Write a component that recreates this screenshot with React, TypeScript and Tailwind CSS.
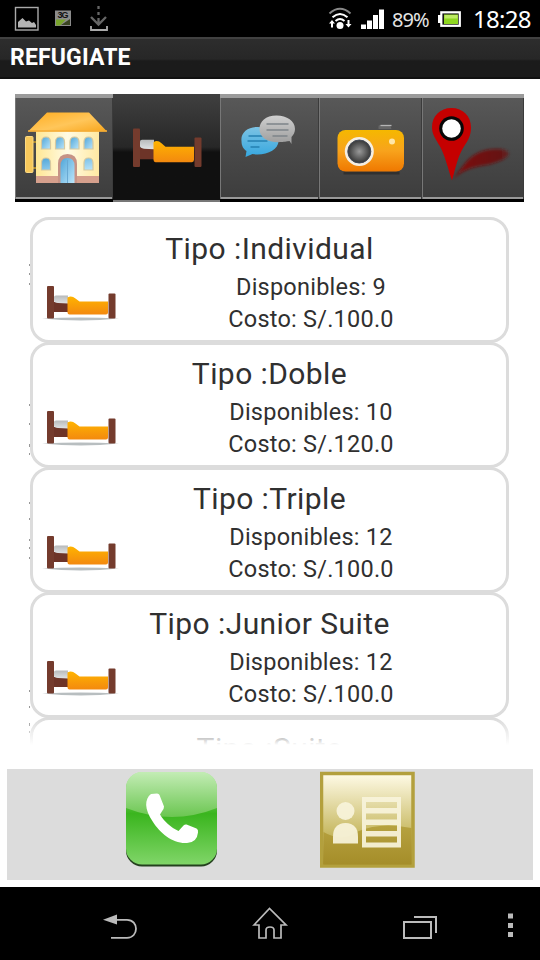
import React from "react";

type Room = { name: string; available?: number; price?: string };

const rooms: Room[] = [
  { name: "Individual", available: 9, price: "100.0" },
  { name: "Doble", available: 10, price: "120.0" },
  { name: "Triple", available: 12, price: "100.0" },
  { name: "Junior Suite", available: 12, price: "100.0" },
  { name: "Suite" },
];

function StatusBar() {
  return (
    <header className="flex h-[37px] items-center bg-black pl-[14px] pr-[9px] font-['Noto_Sans',sans-serif] text-white">
      <svg className="h-[37px] w-[100px]" viewBox="14 0 100 37">
        <rect x="15.500" y="7.500" width="22.500" height="22.500" fill="none" stroke="#aaa" strokeWidth="1.400" />
        <path d="M18 27.500v-5.500l4.500-4 3.500 3.500 3-1 3 2.500 2-1 2 3v2.500z" fill="#b4b4b4" />
        <rect x="55" y="10.500" width="16" height="15.500" fill="#8b8b8b" />
        <path d="M56 19.500h10l-6 6h-4z" fill="#79a52b" />
        <path d="M70 19v6h-9z" fill="#394421" />
        <text x="57.500" y="18" fontSize="9" fontWeight="700" fill="#111" fontFamily="Liberation Sans, sans-serif" textLength="11">3G</text>
        <path d="M98.500 6v3M98.500 12v3M98.500 18v6M91 17l7.500 7.500 7.500-7.500" fill="none" stroke="#666" strokeWidth="2.300" />
        <path d="M91 26v4h16v-4" fill="none" stroke="#aaa" strokeWidth="1.800" />
      </svg>
      <div className="flex-1" />
      <svg className="h-[37px] w-[58px]" viewBox="326 0 58 37">
        <path d="M328.500 13.500q10.500-9.500 21 0" fill="none" stroke="#888" strokeWidth="2" />
        <path d="M331.500 17.300q7.500-6.600 15 0M334.500 21q4.500-4 9 0" fill="none" stroke="#fff" strokeWidth="2" />
        <circle cx="339" cy="25.500" r="3.500" fill="#fff" />
        <path d="M328 23.500l3-3.500 3 3.500h-2v4h-2v-4zM344.500 24h2v-4h2v4h2l-3 3.500z" fill="#fff" />
        <path d="M360 24.500h5v4.500h-5zM366 20.500h5v8.500h-5zM372 15h5v14h-5zM378 9.500h5V29h-5z" fill="#fff" />
      </svg>
      <span className="ml-[7px] mt-[2px] w-[38px] whitespace-nowrap text-[20px] leading-none tracking-[-0.9px] text-[#e4e4e4]">89%</span>
      <svg className="ml-[8px] h-[37px] w-[24px]" viewBox="438 0 24 37">
        <path d="M438 15h3v8h-3z" fill="#fff" />
        <rect x="441.300" y="12.300" width="18.500" height="13.500" fill="#151515" stroke="#fff" strokeWidth="2.200" />
        <rect x="444" y="14.500" width="14" height="9.500" fill="#8ed620" />
        <path d="M444.500 15h13v3.500h-13z" fill="#bdeb63" />
      </svg>
      <span className="ml-[11px] mt-[1px] w-[58px] whitespace-nowrap text-[24px] leading-none tracking-[-0.7px]">18:28</span>
    </header>
  );
}

function HouseIcon() {
  return (
    <svg className="h-full w-full" viewBox="15 94 98 108">
      <defs>
        <linearGradient id="roof" x1="0" y1="0" x2="1" y2="1">
          <stop stopColor="#ffad20" />
          <stop offset="0.55" stopColor="#ffc65a" />
          <stop offset="1" stopColor="#f8a51b" />
        </linearGradient>
        <linearGradient id="wall" x2="1">
          <stop stopColor="#ffe794" />
          <stop offset="0.5" stopColor="#fffbe4" />
          <stop offset="1" stopColor="#ffe9a2" />
        </linearGradient>
        <linearGradient id="glass" x1="0" y1="0" x2="1" y2="1">
          <stop stopColor="#4fa5d8" />
          <stop offset="1" stopColor="#bbe5fa" />
        </linearGradient>
      </defs>
      <path d="M31 142h6M31 168h6" stroke="#c99a26" strokeWidth="1.500" />
      <rect x="25.500" y="136.500" width="7.500" height="36" rx="1" fill="#f7c85b" stroke="#fdda82" />
      <rect x="36" y="130" width="63" height="53" fill="url(#wall)" />
      <rect x="36" y="176" width="63" height="7" fill="#d6a08d" />
      <path d="M47 112.500h42l18 19H28z" fill="url(#roof)" />
      <path d="M28 131h79" stroke="#f3ad37" strokeWidth="1.500" />
      <g fill="url(#glass)" stroke="#d5c8a0" strokeWidth="1.200">
        {[41.5, 55.5, 70, 84].map((x) => (
          <path key={x} d={`M${x} 149v-7q0-5 4.500-5t4.500 5v7z`} />
        ))}
        <path d="M41.500 170v-7q0-5 4.500-5t4.500 5v7zM84 170v-7q0-5 4.500-5t4.500 5v7z" />
      </g>
      <path d="M58 183v-19q0-10 9.500-10t9.500 10v19z" fill="#c69386" />
      <path d="M60.500 183v-17q0-8 7-8t7 8v17z" fill="url(#glass)" />
      <path d="M67.500 160v23" stroke="#69a9d3" />
    </svg>
  );
}

function BedArt({ dark = false }: { dark?: boolean }) {
  return (
    <svg className={dark ? "mt-[7px] h-[52px] w-[78px]" : "h-[44px] w-[78px]"} viewBox="0 0 78 44" preserveAspectRatio="none">
      <defs>
        <linearGradient id="blanket" x2="0" y2="1">
          <stop stopColor="#ffb400" />
          <stop offset="1" stopColor="#f3890f" />
        </linearGradient>
        <linearGradient id="pillow" x2="0" y2="1">
          <stop stopColor="#b8babb" />
          <stop offset="1" stopColor="#dfe2e4" />
        </linearGradient>
      </defs>
      {!dark && <path d="M0 35.500q38-2 77 0-38 4-77 0z" fill="#b8bec0" />}
      <path d="M11 19h18v10H11z" fill="#6d3428" />
      <path d="M12 14q0-1.500 2-1.500h12v8l-10-.5q-4-.5-4-2z" fill="url(#pillow)" />
      <path d="M25.500 14.500q4-2.500 8 1l4 3H66v11q0 2-2 2H27.500q-2 0-2-2z" fill="url(#blanket)" />
      <rect x="5" y="3" width="7" height="32.500" rx="1" fill="#743b2d" />
      <rect x="66.500" y="10.500" width="7" height="25" rx="1" fill="#743b2d" />
    </svg>
  );
}

function ChatIcon() {
  return (
    <svg className="h-full w-full" viewBox="220 94 98 108">
      <defs>
        <linearGradient id="blueChat" x2="0" y2="1">
          <stop stopColor="#7cc3e4" />
          <stop offset="1" stopColor="#36a7df" />
        </linearGradient>
        <linearGradient id="grayChat" x2="0" y2="1">
          <stop stopColor="#d0d0d0" />
          <stop offset="1" stopColor="#9c9c9c" />
        </linearGradient>
      </defs>
      <path d="M257 127c-10 0-17 6-16 14 0 5 2 8 5 10l-1 6 7-3c13 2 26-4 26-13 0-8-9-14-21-14z" fill="url(#blueChat)" />
      <path d="M248 136h18M247 141h20M250 147h9" stroke="#2580b1" strokeWidth="1.300" />
      <path d="M276 115.500c-11 0-17 6-17 13.500 0 9 9 14 22 13 3 0 7-1 8-1l2 3v-7c2-2 3.500-5 3.500-8 0-8-8-13.500-18.500-13.500z" fill="url(#grayChat)" />
      <path d="M266 124h22M266 130h22M272 136h15" stroke="#7d8489" strokeWidth="1.300" />
    </svg>
  );
}

function CameraIcon() {
  return (
    <svg className="h-full w-full" viewBox="319 94 102 108">
      <defs>
        <linearGradient id="cameraBody" x2="0" y2="1">
          <stop stopColor="#f5b800" />
          <stop offset="0.5" stopColor="#f8a31c" />
          <stop offset="1" stopColor="#ef7800" />
        </linearGradient>
        <radialGradient id="lens">
          <stop stopColor="#999" />
          <stop offset="1" stopColor="#373737" />
        </radialGradient>
      </defs>
      <path d="M378 129v-3q0-1 2-1h8q2 0 3 4z" fill="#666" />
      <path d="M380 125.500h11" stroke="#b5b5b5" strokeWidth="1.300" />
      <path d="M343 173h56" stroke="#303030" strokeWidth="3" />
      <rect x="337" y="130" width="66.500" height="41.500" rx="8" fill="url(#cameraBody)" />
      <circle cx="358.800" cy="151.500" r="14.500" fill="#f5eee2" />
      <circle cx="358.800" cy="151.500" r="11.500" fill="url(#lens)" stroke="#454b58" strokeWidth="1" />
      <circle cx="391.500" cy="141.500" r="3" fill="#ffe6a7" />
    </svg>
  );
}

function PinIcon() {
  return (
    <svg className="h-full w-full" viewBox="422 94 102 108">
      <defs>
        <filter id="shadowBlur"><feGaussianBlur stdDeviation="1.700" /></filter>
        <linearGradient id="pinShadow" x2="1"><stop stopColor="#7e0505" /><stop offset="1" stopColor="#651515" stopOpacity=".9" /></linearGradient>
      </defs>
      <path d="M453 179l14-18c8-8 17-12 29-12 17 0 16 8 1 13-12 5-28 2-44 17z" fill="url(#pinShadow)" filter="url(#shadowBlur)" />
      <path d="M451.500 108C440 108 432 116 432 127.500c0 7 4 12 8 19 5 9 8 22 12 34 4-14 6-25 12-34 4-6 7-11 7-19 0-11.500-8-19.500-19.500-19.500z" fill="#c50000" />
      <circle cx="451.500" cy="128.500" r="12.300" fill="#080808" />
      <circle cx="451.500" cy="128.500" r="9.300" fill="#fff" />
    </svg>
  );
}

const tabClass =
  "h-[108px] border-t-4 border-b-[3px] border-t-[#9b9b9b] border-b-black bg-linear-to-b from-[#585858] via-[#484848] via-55% to-[#3d3d3d] shadow-[inset_1px_0_#777,inset_-1px_0_#3b3b3b,inset_0_-2px_#999]";

function Tabs() {
  return (
    <nav className="mx-[15px] mt-[15px] grid h-[108px] w-[509px] grid-cols-[98px_107px_99px_103px_102px]">
      <button className={tabClass}><span className="-mt-1 block h-[108px]"><HouseIcon /></span></button>
      <button className="flex h-[108px] items-center justify-center border-b-2 border-[#777] bg-linear-to-b from-[#404040] via-[#272727] via-50% to-[#101010] to-55%">
        <BedArt dark />
      </button>
      <button className={tabClass}><span className="-mt-1 block h-[108px]"><ChatIcon /></span></button>
      <button className={tabClass}><span className="-mt-1 block h-[108px]"><CameraIcon /></span></button>
      <button className={tabClass}><span className="-mt-1 block h-[108px]"><PinIcon /></span></button>
    </nav>
  );
}

function RoomCard({ room }: { room: Room }) {
  return (
    <article className="-mb-px h-[126px] shrink-0 rounded-[19px] border-[3px] border-[#dcdcdc] bg-white text-[#303030]">
      <h2 className="h-[51px] pt-[11px] text-center text-[30px] leading-[36px] tracking-[0.42px]">Tipo :{room.name}</h2>
      {room.price && (
        <div className="flex">
          <div className="ml-[9px] mt-[12px] w-[78px]"><BedArt /></div>
          <div className="ml-[33px] w-[316px] text-center text-[23.5px] leading-8 tracking-[0.23px]">
            <p>Disponibles: {room.available}</p>
            <p>Costo: S/.{room.price}</p>
          </div>
        </div>
      )}
    </article>
  );
}

function PhoneIcon() {
  return (
    <svg className="h-[97px] w-[93px]" viewBox="125 770 93 97">
      <defs>
        <linearGradient id="green" x2="0" y2="1"><stop stopColor="#b8e9a8" /><stop offset=".45" stopColor="#3ab51e" /><stop offset="1" stopColor="#80d568" /></linearGradient>
        <linearGradient id="gloss" x2="0" y2="1"><stop stopColor="#c5edb7" /><stop offset="1" stopColor="#6bc651" /></linearGradient>
        <clipPath id="phoneClip"><rect x="126" y="771" width="91" height="92.500" rx="16" /></clipPath>
      </defs>
      <rect x="126" y="773" width="91" height="92.500" rx="16" fill="#24401e" />
      <rect x="126" y="771" width="91" height="92.500" rx="16" fill="url(#green)" />
      <path clipPath="url(#phoneClip)" d="M126 770h91v37q-45 18-91 0z" fill="url(#gloss)" />
      <path d="M151 793l6-.5q2 0 2.500 1.500l4.500 11.500q0 2-1.500 4l-2.500 4c4 7 11 13 18.500 16.500l5-5.500q1.500-1.500 3-1l10 4q2 1 1.500 4-1 10-11 10.500c-14 1-27-10-34-21-9-13-8.500-23-2-28z" fill="#fff" />
    </svg>
  );
}

function ContactIcon() {
  return (
    <svg className="h-[97px] w-[95px]" viewBox="320 771 95 97">
      <defs>
        <linearGradient id="gold" x2="0" y2="1"><stop stopColor="#fffbe7" /><stop offset=".62" stopColor="#cabc68" /><stop offset="1" stopColor="#a18b26" /></linearGradient>
        <linearGradient id="goldBase" x2="0" y2="1"><stop stopColor="#b6a240" /><stop offset="1" stopColor="#a58d29" /></linearGradient>
      </defs>
      <rect x="321.500" y="773.500" width="91.500" height="92.500" fill="url(#gold)" stroke="#b3a03d" strokeWidth="3.500" />
      <path d="M323.500 832q19 11 34-.5 23-10 54-3.500v36.500h-88z" fill="url(#goldBase)" />
      <g fill="#f7f3da" fillOpacity=".93">
        <circle cx="345.500" cy="811" r="9" />
        <path d="M333 843.500v-7q0-13 12.500-13.500 12.500.5 12.500 13.500v7z" />
        <path fillRule="evenodd" d="M362 797h39v50.500h-39zm4 5v6h31v-6zm0 11.500v6h31v-6zm0 11.500v6h31v-6zm0 11.500v6h31v-6z" />
      </g>
    </svg>
  );
}

function SystemNav() {
  return (
    <footer className="h-[73px] bg-black">
      <svg className="h-full w-full" viewBox="0 887 540 73" fill="none" stroke="#bbb">
        <path d="M115 919.800h12c12 0 12 18 0 18h-16" strokeWidth="1.800" />
        <path d="M103 919.800l14-5.300v10z" fill="#bbb" stroke="none" />
        <path d="M254 925l15.500-16.500 16.500 16.500h-5v13h-7v-8q0-3-4-3t-4 3v8h-7v-13z" strokeWidth="1.700" />
        <rect x="404" y="922" width="27" height="16" strokeWidth="2" />
        <path d="M414 917h22v16" strokeWidth="2" />
        <path d="M508 913.500h5v5h-5zM508 923h5v5h-5zM508 932h5v5h-5z" fill="#bbb" stroke="none" />
      </svg>
    </footer>
  );
}

export default function App() {
  return (
    <main className="flex h-[960px] w-[540px] flex-col overflow-hidden bg-white font-[Roboto,sans-serif]">
      <StatusBar />
      <div className="h-[42px] border-t-2 border-[#414141] bg-linear-to-b from-[#2d2d2d] from-0% via-[#272727] via-50% to-[#1b1b1b] to-55% pl-[10px] pt-[5px] text-[23px] font-bold leading-[28px] tracking-[0.15px] text-white shadow-[inset_0_-2px_#111]">
        REFUGIATE
      </div>
      <Tabs />
      <section className="relative ml-[29px] mt-[15px] flex h-[528px] w-[480px] flex-col overflow-hidden pl-px">
        {rooms.map((room) => <RoomCard key={room.name} room={room} />)}
        {/* slivers of the page behind the list */}
        <svg className="absolute left-0 top-0 h-[528px] w-px" viewBox="0 0 1 528">
          <path d="M.5 47v2M.5 56v2M.5 66v2M.5 187v2M.5 206v2M.5 227v3M.5 236v2M.5 285v2M.5 301v2M.5 322v2M.5 330v2M.5 340v2M.5 473v2M.5 489v2M.5 506v3M.5 514v2" stroke="#999" strokeWidth="1" />
        </svg>
        <div className="absolute inset-x-0 bottom-0 h-[26px] bg-linear-to-b from-transparent to-white" />
      </section>
      <section className="mx-[7px] mt-[24px] flex h-[111px] gap-[102px] bg-[#dcdcdc] pl-[118px] pt-[2px]">
        <button className="h-[97px]"><PhoneIcon /></button>
        <button className="h-[97px]"><ContactIcon /></button>
      </section>
      <div className="h-[7px]" />
      <SystemNav />
    </main>
  );
}
